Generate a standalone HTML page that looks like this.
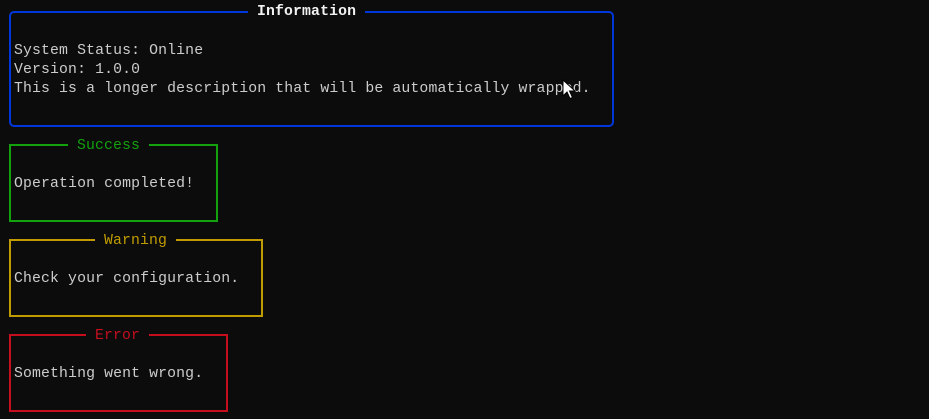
<!DOCTYPE html>
<html><head><meta charset="utf-8"><style>
html,body{margin:0;padding:0;background:#0c0c0c;width:929px;height:419px;overflow:hidden}
body{position:relative;font-family:"Liberation Mono",monospace;font-size:14.8px;letter-spacing:0.13px;color:#cccccc}
.box{position:absolute;box-sizing:border-box;border:2px solid}
.t{position:absolute;line-height:19px;white-space:pre;padding:0 9px;background:#0c0c0c}
.l{position:absolute;left:14px;line-height:19px;white-space:pre}
</style></head><body>
<div class="box" style="left:9px;top:11px;width:605px;height:116px;border-color:#0037da;border-radius:5px"></div>
<div class="t" style="left:248px;top:3px;color:#f2f2f2;font-weight:bold">Information</div>
<div class="l" style="top:42px">System Status: Online</div>
<div class="l" style="top:61px">Version: 1.0.0</div>
<div class="l" style="top:80px">This is a longer description that will be automatically wrapped.</div>

<div class="box" style="left:9px;top:144px;width:209px;height:78px;border-color:#13a10e"></div>
<div class="t" style="left:68px;top:137px;color:#13a10e">Success</div>
<div class="l" style="top:175px">Operation completed!</div>

<div class="box" style="left:9px;top:239px;width:254px;height:78px;border-color:#c19c00"></div>
<div class="t" style="left:95px;top:232px;color:#c19c00">Warning</div>
<div class="l" style="top:270px">Check your configuration.</div>

<div class="box" style="left:9px;top:334px;width:219px;height:78px;border-color:#c50f1f"></div>
<div class="t" style="left:86px;top:327px;color:#c50f1f">Error</div>
<div class="l" style="top:365px">Something went wrong.</div>

<svg style="position:absolute;left:562px;top:79px" width="16" height="22" viewBox="0 0 16 22">
<path d="M1 1 L1 17 L5 13 L8 19.5 L10.5 18.5 L7.5 12 L13 12 Z" fill="#fff" stroke="#000" stroke-width="1"/>
</svg>
</body></html>
